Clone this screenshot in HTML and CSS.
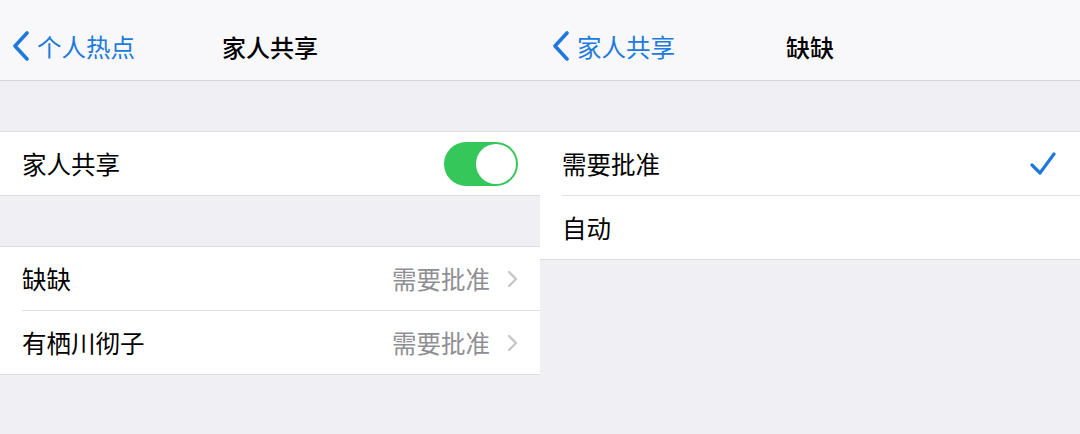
FILE: index.html
```html
<!DOCTYPE html>
<html>
  <head>
    <meta charset="utf-8" />
    <meta name="viewport" content="width=device-width, initial-scale=1" />
    <link rel="stylesheet" href="styles.css">
  </head>
  <body>
    <div class="screens">
      <div class="screen">
        <div class="navbar">
          <a class="back" href="#">
            <svg class="back-icon" viewBox="0 0 18 30" width="18" height="30"><path d="M15 2 L3 15 L15 28" /></svg>
            <span>个人热点</span>
          </a>
          <div class="title">家人共享</div>
          <div></div>
        </div>

        <div class="group">
          <div class="row">
            <div class="row-inner">
              <span class="label">家人共享</span>
              <span class="switch on"><span class="knob"></span></span>
            </div>
          </div>
        </div>

        <div class="group">
          <div class="row">
            <div class="row-inner">
              <span class="label">缺缺</span>
              <span class="value">需要批准</span>
              <svg class="chevron" viewBox="0 0 12 18" width="12" height="18"><path d="M3 2 L10 9 L3 16" /></svg>
            </div>
          </div>
          <div class="row">
            <div class="row-inner">
              <span class="label">有栖川彻子</span>
              <span class="value">需要批准</span>
              <svg class="chevron" viewBox="0 0 12 18" width="12" height="18"><path d="M3 2 L10 9 L3 16" /></svg>
            </div>
          </div>
        </div>
      </div>

      <div class="screen">
        <div class="navbar">
          <a class="back" href="#">
            <svg class="back-icon" viewBox="0 0 18 30" width="18" height="30"><path d="M15 2 L3 15 L15 28" /></svg>
            <span>家人共享</span>
          </a>
          <div class="title">缺缺</div>
          <div></div>
        </div>

        <div class="group">
          <div class="row">
            <div class="row-inner">
              <span class="label">需要批准</span>
              <svg class="check" viewBox="0 0 26 24" width="26" height="24"><path d="M2 13 L10 21 L24 2" /></svg>
            </div>
          </div>
          <div class="row">
            <div class="row-inner">
              <span class="label">自动</span>
            </div>
          </div>
        </div>
      </div>
    </div>
  </body>
</html>
```

FILE: styles.css
```css
html,
body {
  margin: 0;
  background: #efeff4;
  font-family: "Noto Sans CJK SC", "Noto Sans", sans-serif;
  font-size: 24.5px;
  color: #000;
}
.screens {
  display: flex;
  height: 434px;
}
.screen {
  width: 540px;
}

.navbar {
  height: 68px;
  padding-top: 12px;
  box-sizing: content-box;
  background: #f8f8fa;
  border-bottom: 1px solid #d6d6da;
  display: grid;
  grid-template-columns: 1fr auto 1fr;
  align-items: center;
}
.back {
  display: flex;
  align-items: center;
  gap: 7px;
  padding-left: 12px;
  color: #2079dc;
  text-decoration: none;
}
.back-icon path {
  fill: none;
  stroke: #1f78de;
  stroke-width: 3.6;
  stroke-linecap: round;
  stroke-linejoin: round;
}
.title {
  font-weight: 500;
  font-size: 24px;
}

.group {
  margin-top: 50px;
  background: #fff;
  border-top: 1px solid #dcdce0;
  border-bottom: 1px solid #dcdce0;
}
.row {
  padding-left: 22px;
}
.row + .row .row-inner {
  border-top: 1px solid #e0e0e4;
}
.row-inner {
  height: 63px;
  display: flex;
  align-items: center;
  padding-right: 22px;
}
.label {
  flex: 1;
}
.value {
  color: #8e8e93;
  margin-right: 16px;
}
.chevron path {
  fill: none;
  stroke: #c4c4c8;
  stroke-width: 2.2;
  stroke-linecap: round;
  stroke-linejoin: round;
}
.check {
  margin-right: 2px;
}
.check path {
  fill: none;
  stroke: #1f78de;
  stroke-width: 3.2;
  stroke-linecap: round;
  stroke-linejoin: round;
}

.switch {
  width: 74px;
  height: 44px;
  border-radius: 22px;
  background: #35c75a;
  position: relative;
}
.knob {
  position: absolute;
  right: 2px;
  top: 2px;
  width: 40px;
  height: 40px;
  border-radius: 50%;
  background: #fff;
}
```
